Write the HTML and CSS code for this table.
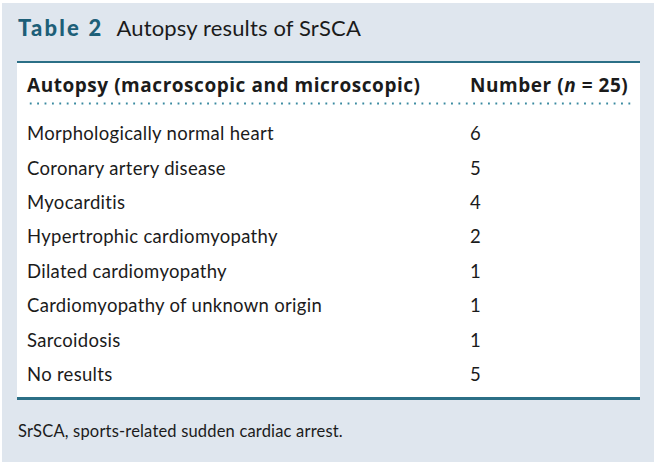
FILE: index.html
```html
<!DOCTYPE html>
<html>
<head>
<meta charset="utf-8">
<link rel="stylesheet" href="styles.css">
</head>
<body>
<div class="panel">
  <div class="title"><span class="label">Table 2</span> Autopsy results of SrSCA</div>
  <div class="box">
    <div class="row head">
      <div class="c1">Autopsy (macroscopic and microscopic)</div>
      <div class="c2">Number (<i>n</i> = 25)</div>
    </div>
    <div class="dots"></div>
    <div class="body">
      <div class="row"><div class="c1">Morphologically normal heart</div><div class="c2">6</div></div>
      <div class="row"><div class="c1">Coronary artery disease</div><div class="c2">5</div></div>
      <div class="row"><div class="c1">Myocarditis</div><div class="c2">4</div></div>
      <div class="row"><div class="c1">Hypertrophic cardiomyopathy</div><div class="c2">2</div></div>
      <div class="row"><div class="c1">Dilated cardiomyopathy</div><div class="c2">1</div></div>
      <div class="row"><div class="c1">Cardiomyopathy of unknown origin</div><div class="c2">1</div></div>
      <div class="row"><div class="c1">Sarcoidosis</div><div class="c2">1</div></div>
      <div class="row"><div class="c1">No results</div><div class="c2">5</div></div>
    </div>
  </div>
  <div class="foot">SrSCA, sports-related sudden cardiac arrest.</div>
</div>
</body>
</html>
```
FILE: styles.css
```css
html, body {
  margin: 0;
  padding: 0;
  background: #ffffff;
}
body {
  padding: 3px 0 0 2px;
  font-family: "Lato", "Open Sans", sans-serif;
  color: #1b1b1b;
}
.panel {
  width: 652px;
  height: 459px;
  background: #dfe6ee;
  box-sizing: border-box;
  padding: 12px 14px 0 15px;
}
.title {
  font-size: 22px;
  line-height: 26px;
  height: 46px;
  padding-left: 1px;
  letter-spacing: 0.15px;
}
.label {
  font-weight: 900;
  color: #1d5f78;
  margin-right: 8px;
  letter-spacing: 2.2px;
}
.box {
  background: #ffffff;
  border-top: 2px solid #2b6f86;
  border-bottom: 3px solid #2b6f86;
  padding: 10px 8px 6px 10px;
}
.row {
  display: flex;
  height: 34.4px;
  align-items: center;
  font-size: 18.5px;
  letter-spacing: 0.3px;
}
.head {
  font-family: "Open Sans", "Lato", sans-serif;
  font-weight: 700;
  height: 24px;
  font-size: 19px;
  letter-spacing: 0.54px;
}
.c1 {
  width: 443px;
}
.c2 {
  flex: 1;
}
.dots {
  height: 3px;
  margin: 5px 0 11px 0;
  background-image: radial-gradient(circle, #3a8aa0 0.9px, transparent 1.3px);
  background-size: 7.4px 3px;
  background-repeat: repeat-x;
}
.foot {
  font-size: 16.5px;
  line-height: 20px;
  padding-top: 21px;
  padding-left: 1px;
  letter-spacing: 0.18px;
}
```
